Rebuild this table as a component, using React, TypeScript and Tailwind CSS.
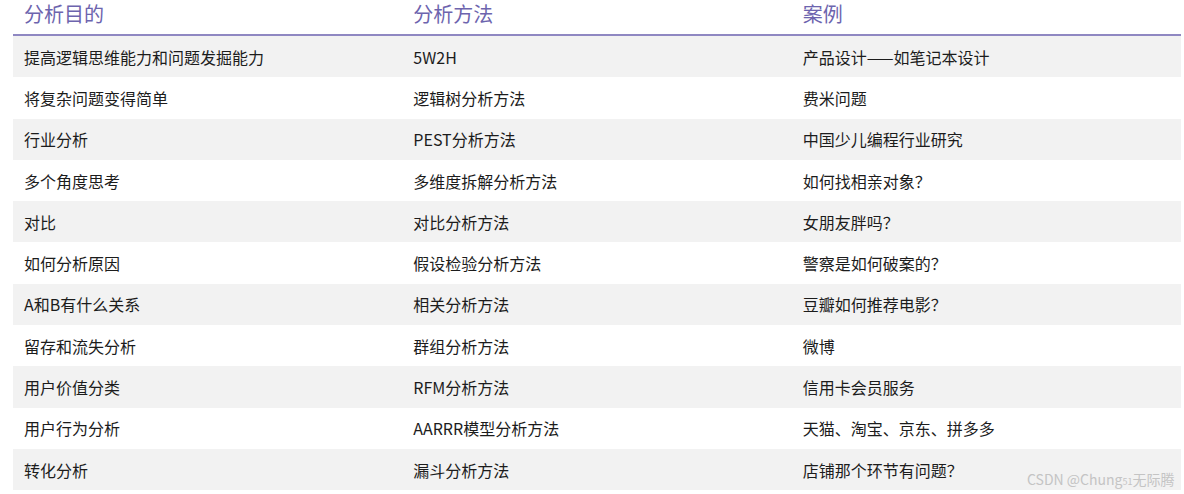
export default function App() {
  const rows = [
    ['提高逻辑思维能力和问题发掘能力', '5W2H', '产品设计——如笔记本设计'],
    ['将复杂问题变得简单', '逻辑树分析方法', '费米问题'],
    ['行业分析', 'PEST分析方法', '中国少儿编程行业研究'],
    ['多个角度思考', '多维度拆解分析方法', '如何找相亲对象？'],
    ['对比', '对比分析方法', '女朋友胖吗？'],
    ['如何分析原因', '假设检验分析方法', '警察是如何破案的？'],
    ['A和B有什么关系', '相关分析方法', '豆瓣如何推荐电影？'],
    ['留存和流失分析', '群组分析方法', '微博'],
    ['用户价值分类', 'RFM分析方法', '信用卡会员服务'],
    ['用户行为分析', 'AARRR模型分析方法', '天猫、淘宝、京东、拼多多'],
    ['转化分析', '漏斗分析方法', '店铺那个环节有问题？'],
  ]

  return (
    <div
      className="relative w-[1184px] h-[494px] bg-white overflow-hidden"
      style={{ fontFamily: '"Noto Sans CJK SC", "Noto Sans", sans-serif' }}
    >
      <div className="ml-[13px] w-[1168px]">
        {/* Header */}
        <div className="grid grid-cols-3 h-[36px] items-center border-b-2 border-[#8f88c2] text-[20px] text-[#6d64ae]">
          <div className="pl-[11px] -mt-[6px]">分析目的</div>
          <div className="pl-[11px] -mt-[6px]">分析方法</div>
          <div className="pl-[11px] -mt-[6px]">案例</div>
        </div>

        {/* Rows */}
        {rows.map((row, i) => (
          <div
            key={i}
            className={`grid grid-cols-3 h-[41.3px] items-center text-[16px] text-[#1c1c1c] ${
              i % 2 === 0 ? 'bg-[#f2f2f2]' : 'bg-white'
            }`}
          >
            {row.map((cell, j) => (
              <div key={j} className="pl-[11px]">
                {cell}
              </div>
            ))}
          </div>
        ))}
      </div>

      {/* Watermark */}
      <div className="absolute left-[1027px] top-[469px] text-[14px] text-[#c4c4c4] whitespace-nowrap">
        CSDN @Chung<span className="text-[9px]">51</span>无际腾
      </div>
    </div>
  )
}
